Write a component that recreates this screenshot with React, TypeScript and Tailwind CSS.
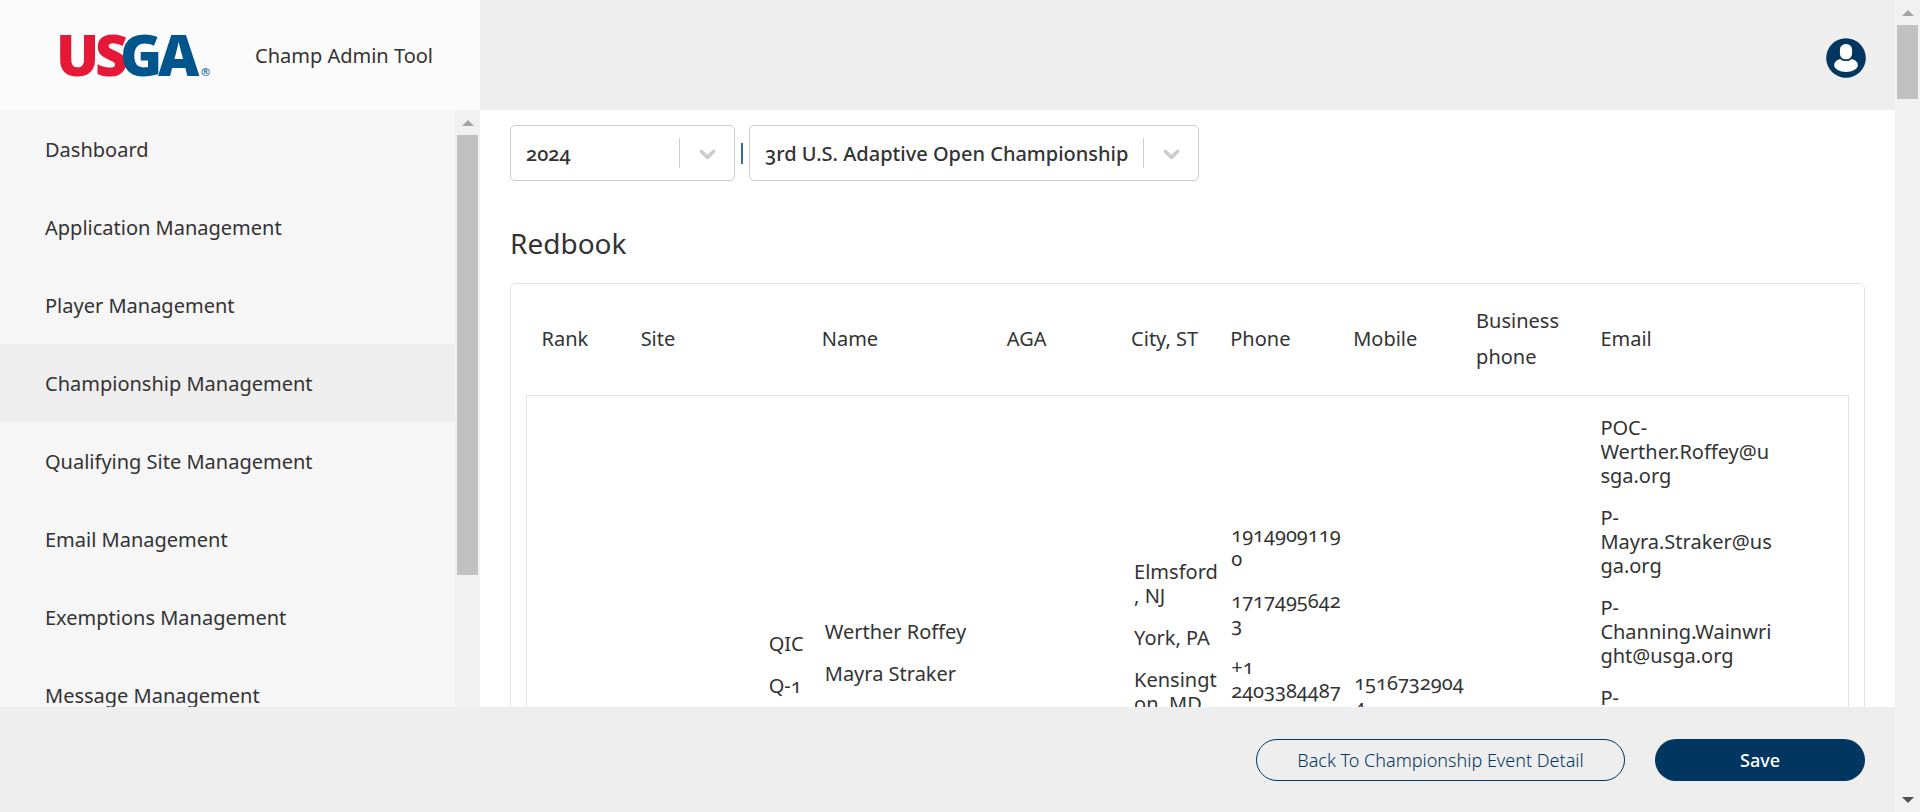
import React from "react";

const navItems = [
  "Dashboard",
  "Application Management",
  "Player Management",
  "Championship Management",
  "Qualifying Site Management",
  "Email Management",
  "Exemptions Management",
  "Message Management",
];

const columns = [
  { label: "Rank", width: "w-[7.5%]" },
  { label: "Site", width: "w-[13.7%]" },
  { label: "Name", width: "w-[14%]" },
  { label: "AGA", width: "w-[9.4%]" },
  { label: "City, ST", width: "w-[7.5%]" },
  { label: "Phone", width: "w-[9.3%]" },
  { label: "Mobile", width: "w-[9.3%]" },
  { label: "Business phone", width: "w-[9.4%]" },
  { label: "Email", width: "w-[19.9%]" },
];

const roles = [["QIC"], ["Q-1"]];
const names = [["Werther Roffey"], ["Mayra Straker"]];
const cities = [["Elmsford", ", NJ"], ["York, PA"], ["Kensingt", "on, MD"]];
const phones = [["1914909119", "0"], ["1717495642", "3"], ["+1", "2403384487"]];
const mobiles = [["1516732904", "4"]];
const emails = [
  ["POC-", "Werther.Roffey@u", "sga.org"],
  ["P-", "Mayra.Straker@us", "ga.org"],
  ["P-", "Channing.Wainwri", "ght@usga.org"],
  ["P-"],
];

function Lines({ entries }: { entries: string[][] }) {
  return (
    <div className="flex flex-col gap-[18px]">
      {entries.map((lines, i) => (
        <p key={i}>
          {lines.map((line, j) => (
            <span key={j} className="block whitespace-nowrap">
              {line}
            </span>
          ))}
        </p>
      ))}
    </div>
  );
}

function Arrow({ down = false, className }: { down?: boolean; className: string }) {
  return (
    <svg viewBox="0 0 12 6" className={`h-[6px] w-[12px] ${className}`} aria-hidden="true">
      <path d={down ? "M0 0h12L6 6z" : "M0 6h12L6 0z"} fill="currentColor" />
    </svg>
  );
}

function Picker({ label, value, className }: { label: string; value: string; className: string }) {
  return (
    <div className={`relative h-14 ${className}`}>
      <select
        aria-label={label}
        defaultValue={value}
        className="h-full w-full appearance-none rounded-[5px] border border-[#cccccc] bg-white pt-[2px] pr-14 pl-[15px] text-xl font-medium text-[#333] oldstyle-nums"
      >
        <option>{value}</option>
      </select>
      <div className="pointer-events-none absolute inset-y-0 right-0 flex w-14 items-center">
        <span className="h-[30px] w-px bg-[#cccccc]" />
        <svg viewBox="0 0 20 20" className="ml-[15px] h-[25px] w-[25px] text-[#cccccc]" aria-hidden="true">
          <path
            d="M5 8.2l5 5 5-5"
            fill="none"
            stroke="currentColor"
            strokeWidth="2.7"
            strokeLinecap="round"
            strokeLinejoin="round"
          />
        </svg>
      </div>
    </div>
  );
}

function Logo() {
  return (
    <svg
      viewBox="0 0 152 80"
      className="h-20 w-[152px] overflow-visible"
      role="img"
      aria-label="USGA"
      fontFamily="'Open Sans', 'Noto Sans', sans-serif"
    >
      <text y="60" fontWeight="800" fontSize="57">
        <tspan x="-4" fill="#e51937">U</tspan>
        <tspan x="35" fill="#e51937">S</tspan>
        <tspan x="60" fill="#00558c">G</tspan>
        <tspan x="98" fill="#00558c">A</tspan>
      </text>
      <text x="141" y="60" fontSize="11" fontWeight="600" fill="#00558c">®</text>
    </svg>
  );
}

export default function App() {
  return (
    <div className="flex h-screen bg-[#eeeeee] font-['Noto_Sans','Open_Sans',sans-serif] text-xl text-[#333]">
      <div className="flex min-w-0 flex-1 flex-col">
        <header className="flex h-[110px] shrink-0 items-center justify-between pr-[29px]">
          <div className="flex h-full w-[480px] items-center bg-[#fbfbfb] pt-[2px] pl-[60px]">
            <Logo />
            <span className="pl-[43px]">Champ Admin Tool</span>
          </div>
          <button type="button" aria-label="Account" className="mt-[6px] rounded-full">
            <svg viewBox="0 0 40 40" className="h-10 w-10" aria-hidden="true">
              <circle cx="20" cy="20" r="19.8" fill="#00365f" />
              <ellipse cx="20" cy="27" rx="11.8" ry="6.9" fill="#fff" />
              <rect x="13" y="5.2" width="14" height="17" rx="6.6" fill="#fff" stroke="#00365f" strokeWidth="1.8" />
            </svg>
          </button>
        </header>

        <div className="flex min-h-0 flex-1">
          <aside className="flex w-[480px] shrink-0 overflow-hidden bg-[#f6f6f6]">
            <nav className="flex-1">
              {navItems.map((item) => (
                <a
                  key={item}
                  href="#"
                  className={`flex h-[78px] items-center pt-[2px] pl-[45px] ${item === "Championship Management" ? "bg-[#eeeeee]" : ""}`}
                >
                  {item}
                </a>
              ))}
            </nav>
            <div className="flex w-[25px] flex-col items-center bg-[#f1f1f1]">
              <span className="flex h-[25px] items-center">
                <Arrow className="text-[#a3a3a3]" />
              </span>
              <span className="h-[440px] w-[21px] bg-[#c1c1c1]" />
            </div>
          </aside>

          <main className="min-w-0 flex-1 overflow-hidden bg-white px-[30px] pt-[15px]">
            <div className="flex items-center gap-[6px]">
              <Picker label="Year" value="2024" className="w-[225px]" />
              <span className="h-[21px] w-[2px] bg-[#2f6ea5]" aria-hidden="true" />
              <Picker label="Championship" value="3rd U.S. Adaptive Open Championship" className="w-[450px]" />
            </div>

            <h1 className="mt-[43px] text-[28px] leading-[38px]">Redbook</h1>

            <section className="mt-[21px] rounded-md border border-[#e3e3e3] px-[15px]">
              <table className="w-full table-fixed border-collapse text-left">
                <thead>
                  <tr className="h-[111px]">
                    {columns.map((c) => (
                      <th key={c.label} scope="col" className={`px-[15px] align-middle leading-9 font-normal ${c.width}`}>
                        {c.label}
                      </th>
                    ))}
                  </tr>
                </thead>
                <tbody>
                  <tr className="border border-[#e3e3e3] align-top leading-6 oldstyle-nums">
                    <td />
                    <td className="pt-[236px] pr-[3px]">
                      <div className="flex justify-end">
                        <Lines entries={roles} />
                      </div>
                    </td>
                    <td className="pt-[224px] pl-[18px]"><Lines entries={names} /></td>
                    <td />
                    <td className="pt-[164px] pl-[18px]"><Lines entries={cities} /></td>
                    <td className="pt-[127px] pl-4"><Lines entries={phones} /></td>
                    <td className="pt-[275px] pl-4"><Lines entries={mobiles} /></td>
                    <td />
                    <td className="pt-5 pb-5 pl-[15px]"><Lines entries={emails} /></td>
                  </tr>
                </tbody>
              </table>
            </section>
          </main>
        </div>

        <footer className="flex h-[105px] shrink-0 items-center justify-end gap-[30px] pr-[30px] text-lg">
          <button type="button" className="h-[42px] w-[369px] rounded-full border border-[#00365f] font-light text-[#00365f]">
            Back To Championship Event Detail
          </button>
          <button type="button" className="h-[42px] w-[210px] rounded-full bg-[#00365f] font-medium text-white">
            Save
          </button>
        </footer>
      </div>

      <div className="flex w-[25px] shrink-0 flex-col items-center bg-[#f1f1f1]">
        <span className="flex h-[25px] items-center">
          <Arrow className="text-[#a3a3a3]" />
        </span>
        <span className="h-[74px] w-[21px] bg-[#c1c1c1]" />
        <span className="mt-auto flex h-[25px] items-center">
          <Arrow down className="text-[#505050]" />
        </span>
      </div>
    </div>
  );
}
